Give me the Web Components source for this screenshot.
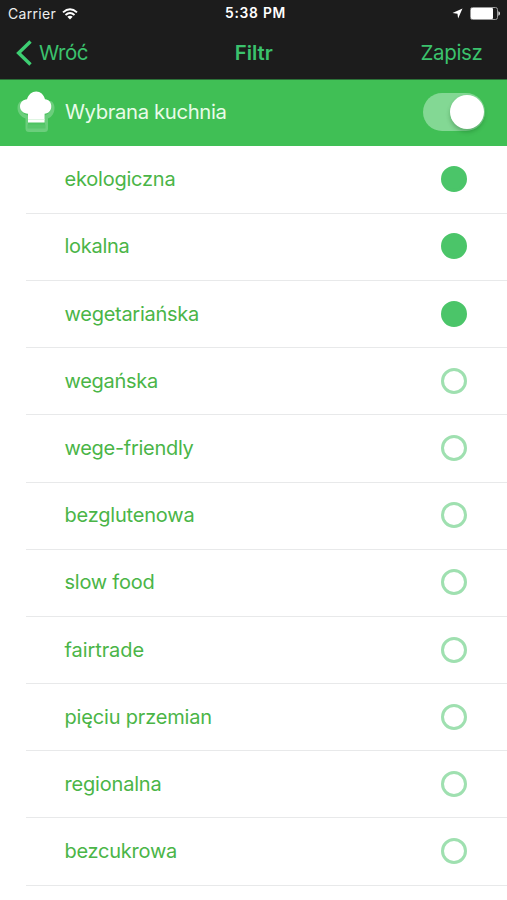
<!DOCTYPE html>
<html lang="pl">
<head>
<meta charset="utf-8">
<title>Filtr</title>
<style>
html,body{margin:0;background:#fff}
body{width:507px;height:900px;overflow:hidden;font-family:Inter,"Liberation Sans",sans-serif}
</style>
</head>
<body>
<filter-screen></filter-screen>
<script>
// Base class: clones markup and styles into an open shadow root.
class Base extends HTMLElement {
  render(html) { this.attachShadow({mode: 'open'}).innerHTML = html; }
}

// Text whose tracking is set so that it fills the given width.
customElements.define('tracked-text', class extends Base {
  connectedCallback() {
    this.render(`<style>:host{display:inline-block;white-space:nowrap}span{display:inline-block}</style><span><slot></slot></span>`);
    const span = this.shadowRoot.querySelector('span');
    const target = parseFloat(this.getAttribute('width'));
    const diff = target - span.getBoundingClientRect().width;
    span.style.letterSpacing = (diff / this.textContent.length) + 'px';
  }
});

customElements.define('status-bar', class extends Base {
  connectedCallback() {
    this.render(`<style>
:host{display:grid;grid-template-columns:1fr auto 1fr;align-items:center;height:27px;padding:0 7px 0 8px;color:#eee;font-size:14px;line-height:27px}
.left,.right{display:flex;align-items:center}
.left{gap:6px}.right{justify-content:flex-end;gap:7px}
.time{font-weight:600;font-size:13.8px;color:#fff;padding-left:3px}
svg{display:block}
</style>
<div class="left"><tracked-text width="48">Carrier</tracked-text>
<svg width="16" height="12" viewBox="0 0 16 12" fill="none" stroke="#fff" stroke-width="1.9"><path d="M1 4.4Q8-2 15 4.4M3.5 7Q8 3 12.5 7"/><path d="M8 11.6 5.3 8.8Q8 6.6 10.7 8.8Z" fill="#fff" stroke="none"/></svg></div>
<div class="time"><tracked-text width="61">5:38 PM</tracked-text></div>
<div class="right"><svg width="11" height="11" viewBox="0 0 11 11"><path d="M10.5.5 6.1 10.6 5.5 5.7.5 5.1Z" fill="#fff"/></svg>
<svg width="30" height="13" viewBox="0 0 30 13"><rect x=".5" y=".5" width="27" height="12" rx="2" fill="none" stroke="#999"/><rect x="1" y="1" width="22" height="11" rx="1" fill="#fff"/><path d="M28.4 4.2q1.6.6 1.6 2.3t-1.6 2.3z" fill="#ddd"/></svg></div>`);
  }
});

customElements.define('nav-bar', class extends Base {
  connectedCallback() {
    this.render(`<style>
:host{display:grid;grid-template-columns:1fr auto 1fr;align-items:center;height:52px;padding:0 24.5px 0 16px;box-sizing:border-box;color:#3bc26d;font-size:20.5px;line-height:50px}
.back{display:flex;align-items:center;gap:7px}
.title{font-weight:600;font-size:20.3px;padding-left:9px}
.save{text-align:right}
svg{display:block}
</style>
<div class="back"><svg width="16" height="26" viewBox="0 0 16 26" fill="none" stroke="#3dce72" stroke-width="3.4"><path d="M14.5 1.5 2.6 13l11.9 11.5"/></svg><tracked-text width="49">Wróć</tracked-text></div>
<div class="title"><tracked-text width="38">Filtr</tracked-text></div>
<div class="save"><tracked-text width="62">Zapisz</tracked-text></div>`);
  }
});

customElements.define('toggle-switch', class extends Base {
  connectedCallback() {
    this.render(`<style>
:host{display:flex;justify-content:flex-end;align-items:center;box-sizing:border-box;width:62px;height:38px;border-radius:19px;background:#83d894}
i{display:block;width:34px;height:34px;margin:0 1.5px 1px 0;border-radius:50%;background:#fff;box-shadow:0 3px 4px rgba(0,70,15,.28)}
</style><i></i>`);
  }
});

customElements.define('section-header', class extends Base {
  connectedCallback() {
    this.render(`<style>
:host{display:flex;align-items:center;height:67px;box-sizing:border-box;padding:0 22px 2px 17px;background:#40bf55;border-top:1px solid #2b7138;color:#e9fbe9;font-size:20.3px}
svg{display:block;margin-right:9px}
tracked-text{padding-bottom:1.5px}
toggle-switch{margin-left:auto}
</style>
<svg width="39" height="42" viewBox="0 0 39 42"><path d="M4 10C1.500 11.500.5 14 .5 17 .5 22 4 26 8.500 27.500V37.500Q8.500 41 12 41H27.500Q31 41 31 37.500V27.500C35 26 37.500 22 37.500 17 37.500 14 36.500 11.500 34 10Z" fill="#6bce7c"/><path d="M3.500 15C4 21 7 23.500 11 24.500V36H28V24.500C32 23 34 20 34.500 15Z" fill="#4fc363"/><path d="M10.500 33.500H28.500V37.500H10.500Z" fill="#59c76c"/><path d="M11 31.600V22.700C6.500 22.500 3 19.500 3 15.500 3 11.500 6 8.500 10 8.300 11.500 3.500 15 .6 19.200.6S26.700 3.500 28 8.300C32 8.500 34.300 11.500 34.300 15.500 34.300 19.500 31.500 22.500 27.600 22.700V31.600Z" fill="#fff"/><path d="M11 28.500H27.600" stroke="#d7f2db" stroke-width=".8"/></svg>
<tracked-text width="161.500">Wybrana kuchnia</tracked-text><toggle-switch></toggle-switch>`);
  }
});

customElements.define('option-row', class extends Base {
  connectedCallback() {
    this.render(`<style>
:host{display:flex;align-items:center;justify-content:space-between;height:67.2px;box-sizing:border-box;margin-left:26px;padding:0 40px 1px 38.5px;border-bottom:1px solid #e8e9ea;color:#4ab547;font-size:20px}
i{display:block;box-sizing:border-box;width:26px;height:26px;border-radius:50%;border:3px solid #9fe0b0}
:host([checked]) i{background:#4bc569;border-color:#4bc569}
</style><tracked-text width="${this.getAttribute('width')}">${this.getAttribute('label')}</tracked-text><i></i>`);
  }
});

customElements.define('filter-screen', class extends Base {
  connectedCallback() {
    const options = [
      ['ekologiczna', 111, true], ['lokalna', 65, true], ['wegetariańska', 134.5, true],
      ['wegańska', 93.5], ['wege-friendly', 129], ['bezglutenowa', 130], ['slow food', 90],
      ['fairtrade', 79.5], ['pięciu przemian', 147.5], ['regionalna', 97], ['bezcukrowa', 112.5]
    ];
    this.render(`<style>:host{display:block;width:507px;height:900px;overflow:hidden;background:#fff}.bars{background:#1c1c1c}.list{padding-top:.6px}</style>
<div class="bars"><status-bar></status-bar><nav-bar></nav-bar></div>
<section-header></section-header>
<div class="list">${options.map(([label, width, on]) => `<option-row label="${label}" width="${width}"${on ? ' checked' : ''}></option-row>`).join('')}</div>`);
  }
});
</script>
</body>
</html>
